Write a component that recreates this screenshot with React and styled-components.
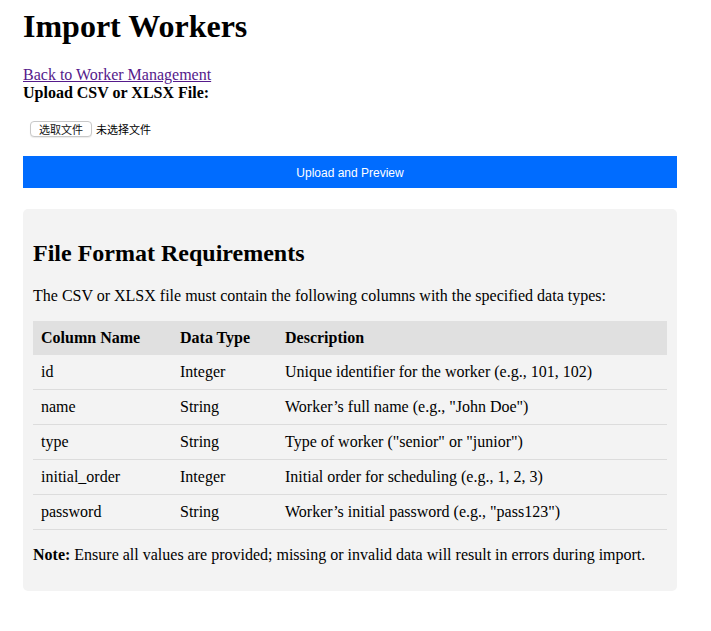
import React from 'react'
import styled, { createGlobalStyle } from 'styled-components'

const GlobalStyle = createGlobalStyle`
  body {
    margin: 8px;
    font-family: "Liberation Serif", "Times New Roman", serif;
    color: #000;
    background: #fff;
  }
`

const Page = styled.div`
  width: 654px;
  padding-left: 15px;
`

const Title = styled.h1`
  font-size: 32px;
  font-weight: 700;
  margin: 0 0 21.44px;
`

const BackLink = styled.a`
  display: block;
  font-size: 16px;
  color: #551a8b;
  text-decoration: underline;
`

const FieldLabel = styled.label`
  display: block;
  font-size: 16px;
  font-weight: 700;
`

const FileRow = styled.div`
  display: flex;
  align-items: center;
  gap: 4px;
  height: 16px;
  margin: 19px 0 19px 7px;
  font-family: "Noto Sans CJK SC", "Noto Sans", sans-serif;
  font-size: 11px;
`

const FileButton = styled.span`
  display: inline-flex;
  align-items: center;
  justify-content: center;
  width: 62px;
  height: 16px;
  box-sizing: border-box;
  border: 1px solid #c8c8c8;
  border-radius: 4px;
  background: #fff;
  box-shadow: 0 1px 1px rgba(0, 0, 0, 0.08);
  color: #111;
`

const FileName = styled.span`
  color: #000;
`

const SubmitButton = styled.button`
  display: block;
  width: 100%;
  height: 32px;
  padding: 2px 0 0;
  border: none;
  background: #006cff;
  color: #fff;
  font-family: "Liberation Sans", Arial, sans-serif;
  font-size: 12px;
  cursor: pointer;
`

const Requirements = styled.section`
  margin-top: 21px;
  padding: 11px 10px;
  background: #f3f3f3;
  border-radius: 5px;
`

const Heading = styled.h2`
  font-size: 24px;
  font-weight: 700;
  margin: 19.92px 0;
`

const Text = styled.p`
  font-size: 16px;
  margin: 16px 0;
`

const Table = styled.table`
  width: 100%;
  border-collapse: collapse;
  font-size: 16px;
`

const HeadCell = styled.th`
  width: ${p => p.$w || 'auto'};
  padding: 8px;
  text-align: left;
  font-weight: 700;
  background: #e0e0e0;
`

const Cell = styled.td`
  padding: 8px;
  border-bottom: 1px solid #dcdcdc;
`

const columns = [
  ['id', 'Integer', 'Unique identifier for the worker (e.g., 101, 102)'],
  ['name', 'String', 'Worker\u2019s full name (e.g., "John Doe")'],
  ['type', 'String', 'Type of worker ("senior" or "junior")'],
  ['initial_order', 'Integer', 'Initial order for scheduling (e.g., 1, 2, 3)'],
  ['password', 'String', 'Worker\u2019s initial password (e.g., "pass123")'],
]

export default function App() {
  return (
    <Page>
      <GlobalStyle />
      <Title>Import Workers</Title>
      <BackLink href="#">Back to Worker Management</BackLink>
      <FieldLabel>Upload CSV or XLSX File:</FieldLabel>
      <FileRow>
        <FileButton>选取文件</FileButton>
        <FileName>未选择文件</FileName>
      </FileRow>
      <SubmitButton>Upload and Preview</SubmitButton>

      <Requirements>
        <Heading>File Format Requirements</Heading>
        <Text>The CSV or XLSX file must contain the following columns with the specified data types:</Text>
        <Table>
          <thead>
            <tr>
              <HeadCell $w="123px">Column Name</HeadCell>
              <HeadCell $w="89px">Data Type</HeadCell>
              <HeadCell>Description</HeadCell>
            </tr>
          </thead>
          <tbody>
            {columns.map(([name, type, desc]) => (
              <tr key={name}>
                <Cell>{name}</Cell>
                <Cell>{type}</Cell>
                <Cell>{desc}</Cell>
              </tr>
            ))}
          </tbody>
        </Table>
        <Text><strong>Note:</strong> Ensure all values are provided; missing or invalid data will result in errors during import.</Text>
      </Requirements>
    </Page>
  )
}
